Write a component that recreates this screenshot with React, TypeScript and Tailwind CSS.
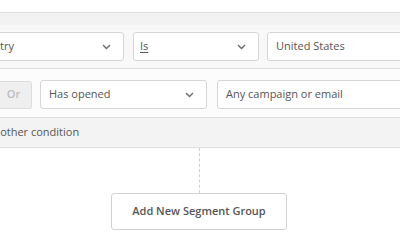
import type { ReactNode } from "react";

function Chevron() {
  return (
    <svg width="9" height="6" viewBox="0 0 9 6" className="shrink-0">
      <polyline points="1,1 4.5,4.5 8,1" fill="none" stroke="#6b6b6b" strokeWidth="1.4" />
    </svg>
  );
}

function SelectBox({ className, children, chevron = true }: { className: string; children: ReactNode; chevron?: boolean }) {
  return (
    <div
      className={`flex h-[29px] shrink-0 items-center justify-between rounded-[3px] border border-[#d6d6d6] bg-white pl-[8px] pr-[12px] text-[11px] text-[#555] ${className}`}
    >
      <span className="whitespace-nowrap">{children}</span>
      {chevron && <Chevron />}
    </div>
  );
}

export default function App() {
  return (
    <div className="h-[250px] w-[400px] overflow-hidden bg-white font-['Open_Sans',sans-serif]">
      <div className="h-[12px]" />
      <div className="border-t border-[#dedede]">
        <div className="h-[12px] bg-[#f2f2f2]" />
        <div className="flex items-center gap-[10px] bg-[#f8f8f8] py-[7px] pl-0">
          <SelectBox className="-ml-[36px] w-[160px]">Country</SelectBox>
          <div className="-ml-px flex h-[29px] w-[126px] shrink-0 items-center justify-between rounded-[3px] border border-[#d6d6d6] bg-white pl-[6px] pr-[12px] text-[11px] text-[#555]">
            <span className="underline underline-offset-2">Is</span>
            <Chevron />
          </div>
          <div className="-ml-[2px] flex h-[29px] w-[160px] shrink-0 items-center rounded-[3px] border border-[#d6d6d6] bg-white pl-[8px] text-[11px] text-[#555]">
            United States
          </div>
        </div>
        <div className="border-t border-[#dedede] bg-[#fcfcfc] pb-[8px] pt-[11px]">
          <div className="flex items-center gap-[8px]">
            <div className="-ml-[5px] flex h-[28px] w-[37px] shrink-0 items-center justify-center rounded-[3px] border border-[#dcdcdc] bg-[#efefef] text-[11px] font-semibold text-[#bdbdbd]">
              Or
            </div>
            <SelectBox className="h-[28px] w-[167px]">Has opened</SelectBox>
            <SelectBox className="ml-[2px] h-[28px] w-[200px]" chevron={false}>
              Any campaign or email
            </SelectBox>
          </div>
        </div>
        <div className="flex h-[31px] items-center border-y border-[#dedede] bg-[#f3f3f3] text-[11px] text-[#555]">
          <span className="-ml-[36px] whitespace-nowrap">Add another condition</span>
        </div>
      </div>
      <div className="flex flex-col items-center">
        <div className="ml-[-2px] h-[45px] border-l border-dashed border-[#cfcfcf]" />
        <button className="ml-[-2px] h-[37px] w-[176px] rounded-[3px] border border-[#d2d2d2] bg-white text-[11px] font-semibold text-[#555]">
          Add New Segment Group
        </button>
      </div>
    </div>
  );
}
